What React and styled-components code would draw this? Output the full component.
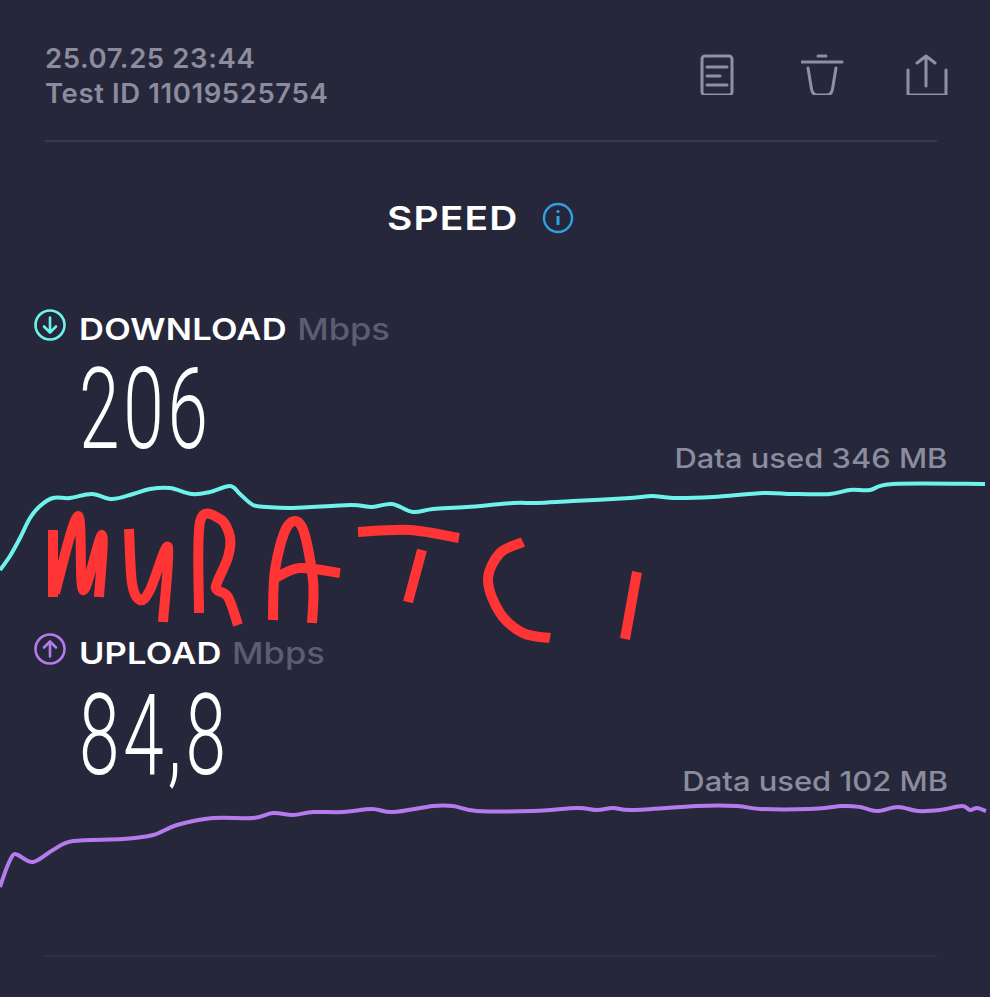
import React from 'react';
import styled, { createGlobalStyle } from 'styled-components';

const Global = createGlobalStyle`
  html, body { margin: 0; padding: 0; background: #26273a; }
  body { font-family: "Inter", "Liberation Sans", sans-serif; }
`;

const Page = styled.div`
  position: relative;
  width: 990px;
  height: 997px;
  overflow: hidden;
  background: #26273a;
  display: flex;
  flex-direction: column;
`;
const Header = styled.header`
  display: flex;
  justify-content: space-between;
  align-items: flex-start;
  padding: 41px 41px 0 45px;
  height: 139px;
  box-sizing: border-box;
`;
const Meta = styled.div`
  font-size: 27.5px;
  line-height: 35px;
  font-weight: 600;
  color: #8b8c9e;
  letter-spacing: 0.6px;
`;
const Actions = styled.div`
  display: flex;
  gap: 60px;
  margin-top: 10px;
`;
const Icon = styled.svg`
  width: 44px;
  height: 44px;
  fill: none;
  stroke: #8f90a3;
  stroke-width: 3;
  stroke-linecap: round;
  stroke-linejoin: round;
  display: block;
`;
const Divider = styled.hr`
  width: 892px;
  height: 2px;
  margin: ${p => p.$top || 0}px 0 0 45px;
  border: 0;
  background: ${p => p.$faint ? '#303148' : '#393a50'};
`;
const TitleRow = styled.div`
  display: flex;
  justify-content: center;
  align-items: center;
  gap: 24px;
  margin: 56px 0 0 -9px;
  height: 40px;
`;
const Title = styled.h1`
  margin: 0;
  font-size: 33px;
  font-weight: 600;
  color: #fff;
  letter-spacing: 1px;
  transform: scaleX(1.18);
  transform-origin: right center;
`;
const Section = styled.section`
  display: flex;
  flex-direction: column;
  margin-top: ${p => p.$top}px;
`;
const LabelRow = styled.div`
  display: flex;
  align-items: center;
  height: 34px;
  padding-left: 33px;
`;
const Badge = styled.svg`
  width: 34px;
  height: 34px;
  margin-right: 12px;
  margin-top: -8px;
  fill: none;
  stroke: ${p => p.$color};
  stroke-width: 2.6;
  stroke-linecap: round;
  stroke-linejoin: round;
`;
const LabelText = styled.div`
  display: flex;
  gap: 9px;
  font-size: 30px;
  transform: scaleX(1.15);
  transform-origin: left center;
`;
const Label = styled.span`
  font-weight: 600;
  color: #fff;
  letter-spacing: 0.2px;
`;
const Unit = styled.span`
  font-weight: 500;
  color: #5c5d72;
`;
const Value = styled.div`
  font-family: "Roboto", "Liberation Sans", sans-serif;
  font-weight: 300;
  font-size: 114px;
  line-height: 100px;
  height: 100px;
  letter-spacing: 6px;
  color: #fff;
  margin: ${p => p.$top}px 0 0 79px;
  transform: scaleX(0.64);
  transform-origin: left center;
`;
const Used = styled.div`
  align-self: flex-end;
  font-size: 27px;
  line-height: 32px;
  font-weight: 500;
  color: #8b8c9e;
  margin: ${p => p.$top}px ${p => p.$right}px ${p => p.$bottom}px 0;
  transform: scaleX(1.145);
  transform-origin: right center;
`;
const Chart = styled.svg`
  display: block;
  width: 990px;
  height: ${p => p.$h}px;
  fill: none;
  stroke: ${p => p.$color};
  stroke-width: 4;
  stroke-linecap: butt;
  stroke-linejoin: round;
`;
const Scribble = styled.svg`
  position: absolute;
  left: 0;
  top: 0;
  width: 990px;
  height: 997px;
  fill: none;
  stroke: #ff3535;
  stroke-width: 10;
  stroke-linecap: butt;
  stroke-linejoin: round;
`;

const smooth = (pts, oy) => {
  let d = `M${pts[0][0]} ${pts[0][1] - oy}`;
  for (let i = 0; i < pts.length - 1; i++) {
    const p0 = pts[i - 1] || pts[i], p1 = pts[i], p2 = pts[i + 1], p3 = pts[i + 2] || p2;
    const c1 = [p1[0] + (p2[0] - p0[0]) / 6, p1[1] + (p2[1] - p0[1]) / 6 - oy];
    const c2 = [p2[0] - (p3[0] - p1[0]) / 6, p2[1] - (p3[1] - p1[1]) / 6 - oy];
    d += `C${c1[0].toFixed(1)} ${c1[1].toFixed(1)} ${c2[0].toFixed(1)} ${c2[1].toFixed(1)} ${p2[0]} ${p2[1] - oy}`;
  }
  return d;
};

const downloadPts = [[0,569],[10,555],[20,537],[30,517],[40,505],[53,497],[70,497],[92,493],[112,498],[133,493],[150,488],[170,487],[192,493],[210,491],[230,485],[240,493],[253,504],[267,506],[293,507],[350,504],[372,506],[392,503],[413,511],[433,508],[467,506],[513,502],[537,502],[573,500],[630,497],[652,495],[673,497],[713,496],[763,492],[793,493],[830,493],[850,489],[870,489],[893,483],[985,483]];
const uploadPts = [[0,887],[7,867],[13,855],[18,855],[33,862],[53,850],[73,841],[123,839],[153,835],[177,825],[213,818],[253,818],[273,813],[293,815],[313,812],[343,812],[372,809],[393,812],[433,806],[453,806],[477,811],[533,811],[577,808],[597,810],[613,808],[633,810],[697,806],[737,806],[760,809],[810,809],[843,806],[860,807],[877,811],[898,807],[918,811],[940,810],[962,806],[970,810],[977,808],[986,811]];

const strokes = [
  [[53,530],[53,597]],
  [[55,593],[78,516],[83,590],[102,535],[99,597]],
  [[129,529],[132,583],[140,600],[150,590],[168,547],[163,622]],
  [[199,613],[200,522],[220,519],[230,537],[228,557],[217,583],[217,590],[228,597],[238,625]],
  [[273,620],[275,570],[287,527],[302,527],[313,580],[312,623]],
  [[277,577],[300,568],[340,573]],
  [[358,532],[410,530],[459,538]],
  [[422,550],[408,602]],
  [[523,542],[500,553],[488,580],[500,613],[523,633],[550,638]],
  [[637,572],[625,639]],
];

const Down = () => (
  <Badge $color="#6ef3ec" viewBox="0 0 34 34">
    <circle cx="17" cy="17" r="14.5" />
    <path d="M17 9.5V24M11 18.5l6 6 6-6" />
  </Badge>
);
const Up = () => (
  <Badge $color="#b57bee" viewBox="0 0 34 34">
    <circle cx="17" cy="17" r="14.5" />
    <path d="M17 24.5V10M11 15.5l6-6 6 6" />
  </Badge>
);

export default function App() {
  return (
    <Page>
      <Global />
      <Header>
        <Meta>25.07.25 23:44<br />Test ID 11019525754</Meta>
        <Actions>
          <Icon viewBox="0 0 44 44">
            <rect x="5" y="5" width="30" height="39" rx="3" />
            <path d="M10 16h20M10 25h13M10 34h20" />
          </Icon>
          <Icon viewBox="0 0 44 44">
            <path d="M1 11h40M17 5h8M7 17l3.5 21q1 6 6 6h9q5 0 6-6L35 17" />
          </Icon>
          <Icon viewBox="0 0 44 44">
            <path d="M3 19v25h38V19M21 35V5M12 12l9-7 9 7" />
          </Icon>
        </Actions>
      </Header>
      <Divider $top={1} />
      <TitleRow>
        <Title>SPEED</Title>
        <svg width="32" height="32" viewBox="0 0 32 32" fill="none" stroke="#2f9fe6" strokeWidth="2.4">
          <circle cx="16" cy="16" r="14" />
          <path d="M16 14v9" strokeWidth="3" />
          <circle cx="16" cy="9.5" r="1.2" fill="#2f9fe6" strokeWidth="1" />
        </svg>
      </TitleRow>
      <Section $top={74}>
        <LabelRow>
          <Down />
          <LabelText>
            <Label>DOWNLOAD</Label>
            <Unit>Mbps</Unit>
          </LabelText>
        </LabelRow>
        <Value $top={13}>206</Value>
        <Used $top={-16} $bottom={4} $right={43}>Data used 346 MB</Used>
        <Chart $color="#6ef3ec" $h={97} viewBox="0 0 990 97">
          <path d={smooth(downloadPts, 478)} />
        </Chart>
      </Section>
      <Section $top={60}>
        <LabelRow>
          <Up />
          <LabelText>
            <Label>UPLOAD</Label>
            <Unit>Mbps</Unit>
          </LabelText>
        </LabelRow>
        <Value $top={15}>84,8</Value>
        <Used $top={-19} $bottom={2} $right={42}>Data used 102 MB</Used>
        <Chart $color="#b57bee" $h={97} viewBox="0 0 990 97">
          <path d={smooth(uploadPts, 800)} />
        </Chart>
      </Section>
      <Divider $faint $top={58} />
      <Scribble viewBox="0 0 990 997">
        {strokes.map((s, i) => <path key={i} d={smooth(s, 0)} />)}
      </Scribble>
    </Page>
  );
}
